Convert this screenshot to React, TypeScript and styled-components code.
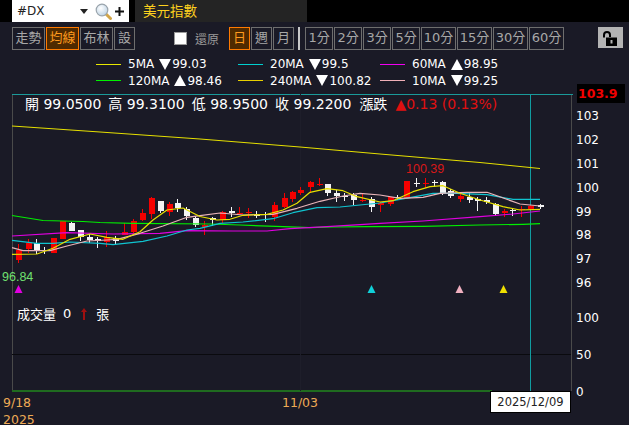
import React from 'react';
import styled, { createGlobalStyle } from 'styled-components';

const GlobalStyle = createGlobalStyle`
  html, body {
    margin: 0;
    padding: 0;
    background: #000;
  }
  * {
    box-sizing: border-box;
  }
`;

const FONT = '"DejaVu Sans", "Noto Sans CJK TC", sans-serif';
const THIN_FONT = '"Liberation Sans", sans-serif';

const RANGES = [
  { label: '走勢', width: 33 },
  { label: '均線', width: 33 },
  { label: '布林', width: 33 },
  { label: '設', width: 21 },
];
const PERIODS = [
  { label: '日', width: 21 },
  { label: '週', width: 21 },
  { label: '月', width: 21 },
];
const MINUTES = [
  { label: '1分', width: 28 },
  { label: '2分', width: 28 },
  { label: '3分', width: 28 },
  { label: '5分', width: 28 },
  { label: '10分', width: 35 },
  { label: '15分', width: 35 },
  { label: '30分', width: 35 },
  { label: '60分', width: 35 },
];

const LEGEND = [
  { name: '5MA', color: '#e8e800', up: false, value: '99.03' },
  { name: '20MA', color: '#00d0d0', up: false, value: '99.5' },
  { name: '60MA', color: '#f000f0', up: true, value: '98.95' },
  { name: '120MA', color: '#00f000', up: true, value: '98.46' },
  { name: '240MA', color: '#e8d000', up: false, value: '100.82' },
  { name: '10MA', color: '#f0b0b8', up: false, value: '99.25' },
];

// x, high, low, body top, body bottom, red?
const CANDLES: [number, number, number, number, number, boolean][] = [
  [18.5, 244, 263, 250, 260, true],
  [28, 239, 253, 243, 249, true],
  [36.5, 239, 254, 243, 250, false],
  [44.5, 247, 254, 250, 251, false],
  [53.5, 238, 253, 238, 253, true],
  [62.5, 221, 239, 221, 239, true],
  [71.5, 222, 231, 223, 231, false],
  [80.5, 230, 241, 230, 237, false],
  [89.5, 234, 243, 237, 240, false],
  [97.5, 237, 248, 239, 241, false],
  [106.5, 231, 247, 237, 242, true],
  [115.5, 236, 244, 238, 241, false],
  [124.5, 223, 235, 232, 235, true],
  [133.5, 219, 233, 221, 232, true],
  [142.5, 209, 221, 213, 220, true],
  [151, 197, 219, 198, 214, true],
  [160, 201, 213, 201, 211, false],
  [169, 202, 216, 204, 212, true],
  [177.5, 199, 212, 203, 208, false],
  [186.5, 207, 220, 209, 216, false],
  [195, 216, 227, 218, 225, false],
  [204, 221, 235, 225, 227, true],
  [212.5, 217, 226, 218, 220, false],
  [222, 211, 223, 212, 220, true],
  [231, 207, 217, 211, 213, false],
  [239.5, 207, 214, 213, 214, true],
  [248.5, 208, 218, 212, 213, true],
  [256.5, 211, 218, 214, 216, false],
  [265.5, 212, 222, 214, 215, false],
  [274.5, 202, 221, 205, 217, true],
  [284, 193, 208, 198, 207, true],
  [292.5, 191, 202, 192, 199, true],
  [300.5, 187, 195, 190, 193, true],
  [310, 181, 193, 182, 187, true],
  [319, 178, 186, 184, 185, true],
  [327.5, 184, 196, 184, 193, false],
  [336.5, 190, 202, 193, 196, false],
  [344.5, 193, 201, 196, 197, false],
  [353.5, 193, 205, 195, 200, false],
  [362.5, 194, 202, 200, 201, true],
  [371.5, 197, 212, 199, 207, false],
  [380.5, 202, 212, 203, 205, true],
  [390, 197, 206, 197, 204, true],
  [397.5, 195, 200, 197, 198, false],
  [406.5, 181, 198, 181, 198, true],
  [416, 178, 187, 183, 184, false],
  [425, 178, 188, 183, 184, true],
  [434, 180, 187, 182, 183, false],
  [442, 181, 195, 182, 194, false],
  [450.5, 189, 198, 191, 196, false],
  [460, 194, 202, 196, 199, true],
  [469, 193, 203, 197, 200, false],
  [477.5, 197, 211, 199, 201, false],
  [486.5, 197, 204, 200, 202, false],
  [495, 203, 216, 204, 214, false],
  [504, 209, 217, 211, 213, true],
  [512.5, 208, 216, 210, 211, false],
  [521.5, 206, 217, 209, 210, true],
  [530.5, 205, 209, 206, 209, true],
  [540, 204, 209, 205, 207, false],
];

const LINES: { color: string; width: number; points: string }[] = [
  {
    color: '#e6e000',
    width: 1,
    points: '12,126 100,132 200,139 300,147 380,154 480,162.5 540,168.5',
  },
  {
    color: '#00ee00',
    width: 1.2,
    points:
      '12,215.5 43,220.5 83,221.5 100,222.5 133,223.3 210,224 240,225 283,226.7 310,227.7 333,227 367,226.7 423,226.3 480,225 523,224.3 540,223.7',
  },
  {
    color: '#e000e0',
    width: 1.2,
    points:
      '12,236 67,232.7 113,234 160,233.3 187,230.7 233,231 267,231 290,228.7 327,226.7 360,224.7 380,223.3 423,221 480,216.7 513,214 540,211',
  },
  {
    color: '#10c4d0',
    width: 1.2,
    points:
      '12,240.3 37,243.3 53,243.3 70,242 100,243.3 113,244.7 143,241.3 167,236 187,230 200,228.3 220,223.3 243,222 273,218.7 293,212.7 317,207.7 340,207 360,205 380,203 400,199.3 433,193.3 457,193.3 487,194.7 513,199.3 540,199.3',
  },
  {
    color: '#e8b4b8',
    width: 1.2,
    points:
      '12,247.7 23,250.7 50,250.7 67,246 87,241 107,240 117,239.3 140,233.3 163,226 187,217.3 200,215.7 220,213 243,215 273,214.3 297,208.3 320,201.3 343,196 360,193.3 380,195 400,198.3 423,197.3 440,193.3 467,192.3 487,192.3 520,204 540,206',
  },
  {
    color: '#e6e000',
    width: 1.2,
    points:
      '12,254.3 37,254 53,248.3 70,239.3 90,234 107,237.3 123,239.3 140,231.7 153,220 167,210 183,208 200,216.5 217,220 230,219.3 243,215.3 267,214.3 283,210 297,203.3 310,192.3 327,188.7 343,190.7 357,196.7 380,202 393,200.7 413,191.7 430,186.7 443,185.7 460,193.3 480,200 503,206.7 520,210 540,209.3',
  },
];

const PRICE_TICKS = [
  { label: '103', y: 115 },
  { label: '102', y: 139 },
  { label: '101', y: 163 },
  { label: '100', y: 187 },
  { label: '99', y: 211 },
  { label: '98', y: 234 },
  { label: '97', y: 258 },
  { label: '96', y: 282 },
  { label: '100', y: 317 },
  { label: '50', y: 354 },
  { label: '0', y: 391 },
];

const MARKERS = [
  { x: 18.5, color: '#e000e0' },
  { x: 371.5, color: '#10d0d8' },
  { x: 459.5, color: '#f0b0c0' },
  { x: 503.5, color: '#f0e000' },
];

const Triangle = ({ up }: { up: boolean }) => (
  <TriangleIcon viewBox="0 0 12 11">
    <polygon points={up ? '6,0 12,11 0,11' : '0,0 12,0 6,11'} />
  </TriangleIcon>
);

const App = () => (
  <Page>
    <GlobalStyle />
    <Header>
      <SearchBox>
        <SearchText>#DX</SearchText>
        <Caret />
        <svg width="17" height="17" viewBox="0 0 17 17">
          <defs>
            <radialGradient id="lens" cx="40%" cy="35%" r="70%">
              <stop offset="0%" stopColor="#ffffff" />
              <stop offset="100%" stopColor="#bcd2e4" />
            </radialGradient>
          </defs>
          <line x1="10.500" y1="10.500" x2="15.500" y2="15.500" stroke="#d2a548" strokeWidth="3" strokeLinecap="round" />
          <circle cx="7" cy="7" r="5.800" fill="url(#lens)" stroke="#9aa4ac" strokeWidth="1.200" />
        </svg>
        <PlusSign>
          <svg width="9" height="9" viewBox="0 0 9 9">
            <path d="M3.500 0h2v3.500H9v2H5.500V9h-2V5.500H0v-2h3.500z" fill="#111" />
          </svg>
        </PlusSign>
      </SearchBox>
      <TitleBar>美元指數</TitleBar>
    </Header>

    <Toolbar>
      <ButtonGroup>
        {RANGES.map(item => (
          <ToolButton key={item.label} $width={item.width} $active={item.label === '均線'}>
            {item.label}
          </ToolButton>
        ))}
      </ButtonGroup>
      <RestoreLabel>
        <CheckBox />
        還原
      </RestoreLabel>
      <ButtonGroup>
        {PERIODS.map(item => (
          <ToolButton key={item.label} $width={item.width} $active={item.label === '日'}>
            {item.label}
          </ToolButton>
        ))}
      </ButtonGroup>
      <Divider />
      <ButtonGroup>
        {MINUTES.map(item => (
          <ToolButton key={item.label} $width={item.width}>
            {item.label}
          </ToolButton>
        ))}
      </ButtonGroup>
      <LockButton>
        <svg width="20" height="20" viewBox="0 0 20 20">
          <path d="M3 9.500V7a3 3 0 0 1 6 0v2" fill="none" stroke="#000" strokeWidth="2" />
          <rect x="5" y="9.500" width="11" height="8.500" fill="#000" />
          <rect x="9.500" y="12" width="2" height="3.500" fill="#b4b4b4" />
        </svg>
      </LockButton>
    </Toolbar>

    <Legend>
      {LEGEND.map(item => (
        <LegendItem key={item.name}>
          <LegendLine $color={item.color} />
          <LegendName>{item.name}</LegendName>
          <Triangle up={item.up} />
          <span>{item.value}</span>
        </LegendItem>
      ))}
    </Legend>

    <ChartArea>
      <ChartSvg width="629" height="331" viewBox="0 94 629 331">
        <line x1="12.500" y1="94" x2="12.500" y2="391" stroke="#4a4a4a" />
        <line x1="571.500" y1="94" x2="571.500" y2="391" stroke="#4a4a4a" />
        <line x1="12" y1="94.500" x2="573" y2="94.500" stroke="#1a9a9a" />
        <line x1="12" y1="354.500" x2="571" y2="354.500" stroke="#0a0a0e" />
        <line x1="12" y1="391" x2="492" y2="391" stroke="#1f6b1f" strokeWidth="2" />
        <line x1="300.500" y1="94" x2="300.500" y2="391" stroke="#1e1e2a" />
        <line x1="530.500" y1="94" x2="530.500" y2="391" stroke="#119ca0" />

        {CANDLES.map(([x, high, low, top, bottom, red]) => {
          const color = red ? '#f40000' : '#f4f4f4';
          const cx = Math.floor(x) + 0.5;
          return (
            <g key={x}>
              <line x1={cx} y1={high} x2={cx} y2={low} stroke={color} />
              <rect x={cx - 2.5} y={top} width={6} height={bottom - top} fill={color} />
            </g>
          );
        })}

        {LINES.map((line, idx) => (
          <polyline
            key={idx}
            points={line.points}
            fill="none"
            stroke={line.color}
            strokeWidth={line.width}
            strokeLinejoin="round"
          />
        ))}

        {MARKERS.map(marker => (
          <polygon
            key={marker.x}
            points={`${marker.x - 4},293 ${marker.x + 4},293 ${marker.x},285`}
            fill={marker.color}
          />
        ))}

        {PRICE_TICKS.map(tick => (
          <AxisText key={`${tick.label}-${tick.y}`} x="576" y={tick.y + 4.500}>
            {tick.label}
          </AxisText>
        ))}

        <HighText x="406" y="173">100.39</HighText>
        <LowText x="2" y="281">96.84</LowText>
        <DateText x="3" y="407">9/18</DateText>
        <DateText x="282" y="407">11/03</DateText>
        <DateText x="3" y="424">2025</DateText>
      </ChartSvg>

      <QuoteBar>
        <span>開 99.0500</span>
        <span>高 99.3100</span>
        <span>低 98.9500</span>
        <span>收 99.2200</span>
        <QuoteChange>
          <span>漲跌</span>
          <Rise>▲0.13 (0.13%)</Rise>
        </QuoteChange>
      </QuoteBar>
      <LastPrice>103.9</LastPrice>
      <VolumeLabel>
        <span>成交量</span>
        <span>0</span>
        <VolumeArrow width="8" height="12" viewBox="0 0 8 12">
          <path d="M4 0L7 4H5V12H3V4H1z" fill="#a01010" />
        </VolumeArrow>
        <span>張</span>
      </VolumeLabel>
      <DateTip>2025/12/09</DateTip>
    </ChartArea>
  </Page>
);

const Page = styled.div`
  width: 629px;
  height: 425px;
  overflow: hidden;
  background: #000;
  font-family: ${FONT};
`;

const Header = styled.header`
  display: flex;
  height: 22px;
  padding-left: 12px;
  gap: 6px;
`;

const SearchBox = styled.div`
  display: flex;
  align-items: center;
  width: 117px;
  height: 22px;
  padding: 0 5px;
  background: #fff;
`;

const SearchText = styled.span`
  flex: 1;
  font-size: 12px;
  color: #222;
`;

const Caret = styled.i`
  width: 0;
  height: 0;
  margin-right: 7px;
  border-left: 4px solid transparent;
  border-right: 4px solid transparent;
  border-top: 5px solid #222;
`;

const PlusSign = styled.span`
  display: flex;
  margin-left: 3px;
`;

const TitleBar = styled.div`
  width: 172px;
  padding-left: 8px;
  background: #242424;
  color: #ffd21e;
  font-size: 13.5px;
  line-height: 22px;
`;

const Toolbar = styled.div`
  display: flex;
  align-items: center;
  height: 28px;
  padding: 5px 0 0 12px;
  background: #1a1a26;
`;

const ButtonGroup = styled.div`
  display: flex;
  gap: 1px;
`;

const ToolButton = styled.div<{ $active?: boolean; $width: number }>`
  width: ${props => props.$width}px;
  height: 23px;
  border: 1px solid ${props => (props.$active ? '#ff7a00' : '#6e6e6e')};
  background: ${props => (props.$active ? '#4f2a00' : 'transparent')};
  color: ${props => (props.$active ? '#ff9a1e' : '#a8a8a8')};
  font-size: 13px;
  line-height: 20px;
  text-align: center;
  white-space: nowrap;
`;

const RestoreLabel = styled.div`
  display: flex;
  align-items: center;
  gap: 8px;
  margin: 0 10px 0 39px;
  color: #9a9a9a;
  font-size: 12px;
`;

const CheckBox = styled.div`
  width: 13px;
  height: 13px;
  border: 1px solid #9a9a9a;
  background: #fff;
`;

const Divider = styled.div`
  width: 2px;
  height: 23px;
  margin: 0 5px 0 4px;
  background: #c8c8c8;
`;

const LockButton = styled.div`
  display: flex;
  align-items: center;
  justify-content: center;
  width: 25px;
  height: 21px;
  margin-left: 34px;
  margin-bottom: 2px;
  background: #b4b4b4;
`;

const Legend = styled.div`
  display: grid;
  grid-template-columns: 142px 142px 130px;
  grid-auto-rows: 16.5px;
  height: 44px;
  padding: 6px 0 0 96px;
  background: #1a1a26;
`;

const LegendItem = styled.div`
  display: flex;
  align-items: center;
  color: #fff;
  font-size: 12px;
`;

const LegendLine = styled.i<{ $color: string }>`
  flex: none;
  width: 25px;
  height: 0;
  margin-right: 7px;
  border-top: 1px solid ${props => props.$color};
`;

const LegendName = styled.span`
  margin-right: 5px;
`;

const TriangleIcon = styled.svg`
  width: 12px;
  height: 11px;
  margin-right: 1px;
  fill: #fff;
`;

const ChartArea = styled.main`
  position: relative;
  height: 331px;
  background: #1a1a26;
`;

const ChartSvg = styled.svg`
  display: block;
`;

const AxisText = styled.text`
  font-family: ${FONT};
  font-size: 12px;
  fill: #fff;
`;

const HighText = styled.text`
  font-family: ${THIN_FONT};
  font-size: 12.5px;
  fill: #d81818;
`;

const LowText = styled.text`
  font-family: ${THIN_FONT};
  font-size: 12.5px;
  fill: #70e070;
`;

const DateText = styled.text`
  font-family: ${FONT};
  font-size: 12.5px;
  fill: #eeaa55;
`;

const QuoteBar = styled.div`
  position: absolute;
  top: 0;
  left: 25px;
  display: flex;
  gap: 7px;
  color: #fff;
  font-size: 14px;
  line-height: 20px;
  white-space: nowrap;
`;

const QuoteChange = styled.span`
  display: flex;
  gap: 8px;
  margin-left: 1px;
`;

const Rise = styled.span`
  color: #e01010;
`;

const LastPrice = styled.div`
  position: absolute;
  top: -10px;
  left: 577px;
  width: 48px;
  height: 19px;
  padding-left: 1px;
  background: #000;
  color: #f00000;
  font-size: 12.5px;
  font-weight: 700;
  line-height: 19px;
`;

const VolumeLabel = styled.div`
  position: absolute;
  top: 210px;
  left: 17px;
  display: flex;
  align-items: center;
  gap: 7px;
  color: #fff;
  font-size: 13px;
`;

const VolumeArrow = styled.svg`
  margin: 0 1px 0 2px;
`;

const DateTip = styled.div`
  position: absolute;
  top: 297px;
  left: 490px;
  width: 81px;
  height: 22px;
  border: 1px solid #000;
  background: #fff;
  color: #222;
  font-size: 11.5px;
  line-height: 20px;
  text-align: center;
`;

export default App;
